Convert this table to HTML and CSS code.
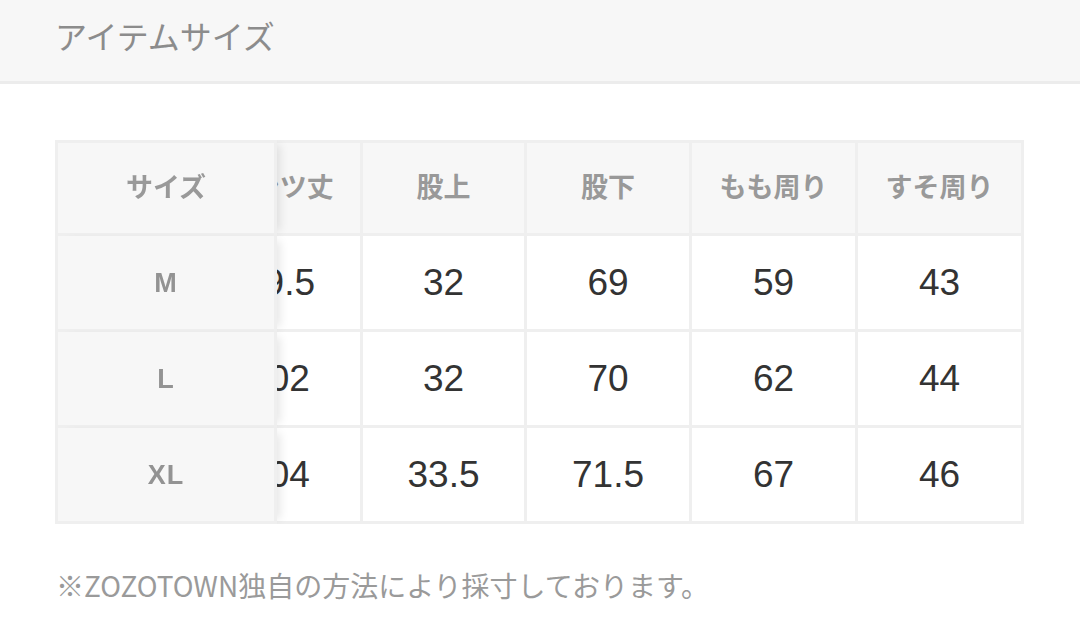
FILE: index.html
```html
<!DOCTYPE html>
<html lang="ja">
<head>
<meta charset="utf-8">
<title>アイテムサイズ</title>
<link rel="stylesheet" href="styles.css">
</head>
<body>
<header class="title-bar">
  <h2 class="title">アイテムサイズ</h2>
</header>
<section class="size-section">
  <div class="table-scroll">
    <table class="size-table">
      <thead>
        <tr>
          <th class="cell head sticky">サイズ</th>
          <th class="cell head w165">パンツ丈</th>
          <th class="cell head w164">股上</th>
          <th class="cell head w165">股下</th>
          <th class="cell head w166">もも周り</th>
          <th class="cell head w166">すそ周り</th>
        </tr>
      </thead>
      <tbody>
        <tr>
          <th class="cell size sticky">M</th>
          <td class="cell num">99.5</td>
          <td class="cell num">32</td>
          <td class="cell num">69</td>
          <td class="cell num">59</td>
          <td class="cell num">43</td>
        </tr>
        <tr>
          <th class="cell size sticky">L</th>
          <td class="cell num">102</td>
          <td class="cell num">32</td>
          <td class="cell num">70</td>
          <td class="cell num">62</td>
          <td class="cell num">44</td>
        </tr>
        <tr>
          <th class="cell size sticky">XL</th>
          <td class="cell num">104</td>
          <td class="cell num">33.5</td>
          <td class="cell num">71.5</td>
          <td class="cell num">67</td>
          <td class="cell num">46</td>
        </tr>
      </tbody>
    </table>
  </div>
  <p class="note">※ZOZOTOWN独自の方法により採寸しております。</p>
</section>
</body>
</html>
```
FILE: styles.css
```css
* { box-sizing: border-box; }

html, body {
  margin: 0;
  padding: 0;
  background: #ffffff;
}

body {
  font-family: "Noto Sans CJK JP", "Liberation Sans", sans-serif;
  width: 1080px;
  height: 623px;
  overflow: hidden;
}

.title-bar {
  height: 84px;
  background: #f7f7f7;
  border-bottom: 3px solid #ececec;
  display: flex;
  align-items: center;
  padding-left: 55px;
}

.title {
  margin: 0;
  font-size: 32px;
  font-weight: 400;
  color: #8c8c8c;
  line-height: 1;
  padding-bottom: 12px;
}

.size-section {
  padding: 56px 56px 0 55px;
}

.table-scroll {
  overflow-x: auto;
  direction: rtl;
  scrollbar-width: none;
}
.table-scroll::-webkit-scrollbar { display: none; }

.size-table {
  direction: ltr;
  table-layout: fixed;
  width: 1048px;
  border-collapse: separate;
  border-spacing: 0;
}

.cell {
  height: 96px;
  padding: 0;
  text-align: center;
  vertical-align: middle;
  border-right: 3px solid #efefef;
  border-bottom: 3px solid #efefef;
  background: #ffffff;
}

.w164 { width: 164px; }
.w165 { width: 165px; }
.w166 { width: 166px; }

.head {
  background: #f7f7f7;
  border-top: 3px solid #efefef;
  padding-bottom: 6px;
  font-family: "Noto Sans CJK JP", sans-serif;
  font-size: 27px;
  font-weight: 700;
  color: #999999;
}

.sticky {
  position: sticky;
  left: 0;
  z-index: 2;
  width: 222px;
  border-left: 3px solid #efefef;
  background: #f7f7f7;
  box-shadow: 8px 0 9px -5px rgba(0, 0, 0, 0.1);
}

.size {
  font-family: "Liberation Sans", sans-serif;
  font-size: 27px;
  font-weight: 700;
  color: #939393;
  letter-spacing: 1px;
  padding-top: 2px;
}

.num {
  font-family: "Liberation Sans", sans-serif;
  font-size: 37px;
  font-weight: 400;
  color: #333333;
}

.note {
  margin: 42px 0 0 1px;
  font-size: 28px;
  line-height: 38px;
  color: #9a9a9a;
}
```
